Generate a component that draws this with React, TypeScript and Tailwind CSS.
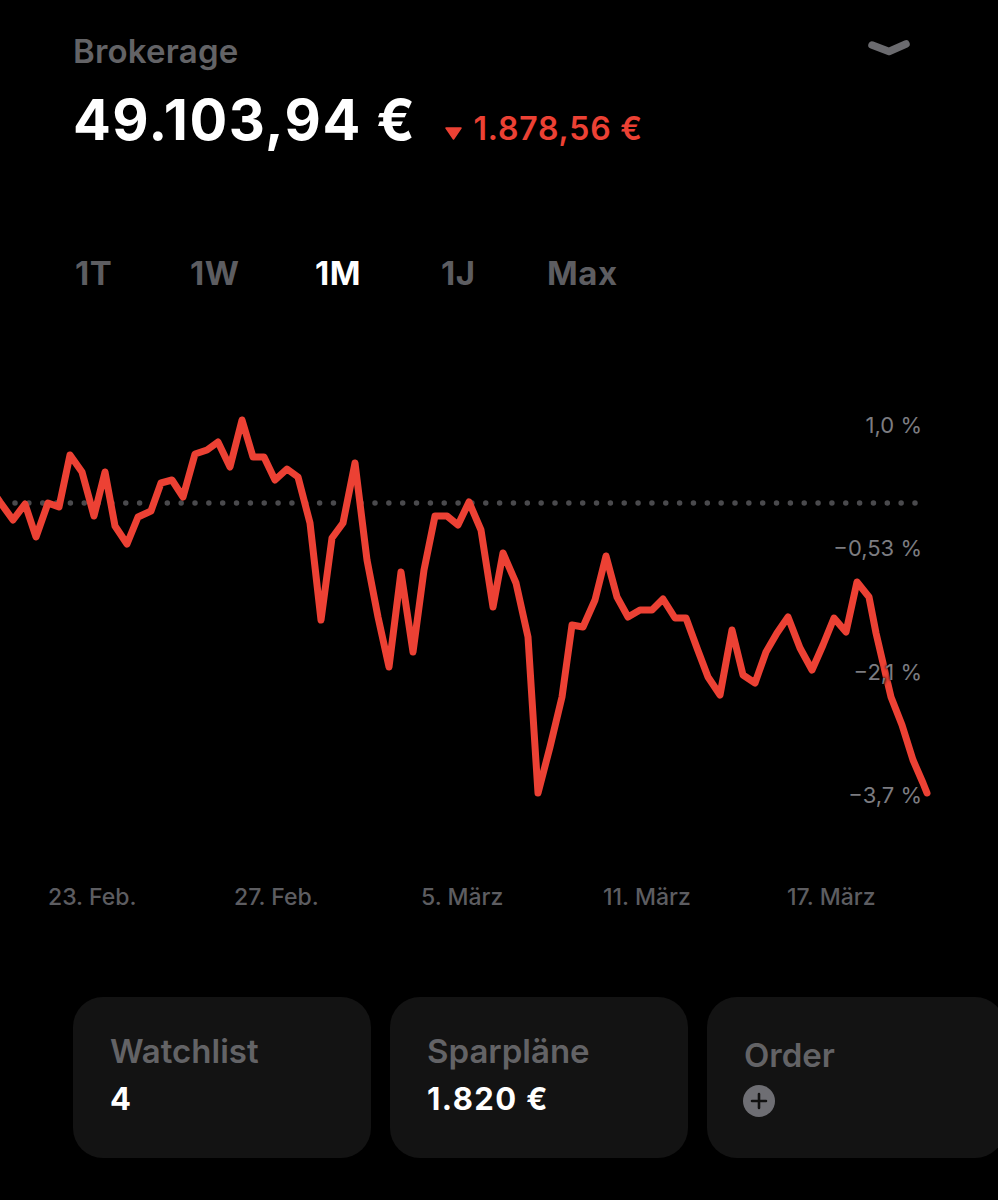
import React from "react";

const points: [number, number][] = [
  [-4, 496], [0, 502], [13, 520], [25, 504], [36, 537], [48, 503], [59, 507], [70, 455], [82, 472],
  [94, 516], [105, 472], [115, 526], [127, 544], [138, 517], [151, 511], [161, 483], [172, 480],
  [183, 497], [195, 454], [207, 450], [218, 442], [230, 467], [242, 420], [253, 457], [264, 457],
  [275, 480], [287, 469], [298, 477], [310, 523], [321, 620], [332, 538], [343, 523], [355, 463],
  [367, 560], [378, 617], [389, 667], [401, 572], [413, 652], [424, 570], [435, 516], [447, 516],
  [458, 525], [469, 502], [481, 530], [493, 607], [503, 553], [516, 583], [528, 637], [538, 793],
  [550, 747], [562, 697], [572, 625], [583, 627], [595, 600], [606, 556], [617, 597], [628, 617],
  [640, 610], [652, 610], [663, 599], [675, 618], [686, 618], [697, 648], [708, 677], [720, 695],
  [732, 630], [743, 675], [755, 683], [766, 652], [777, 633], [788, 617], [800, 648], [812, 670],
  [823, 645], [834, 618], [846, 632], [857, 582], [869, 597], [876, 633], [883, 663], [891, 697],
  [902, 725], [913, 760], [923, 783], [927, 793],
];

const tabs = [
  { label: "1T", w: "w-[115px]" },
  { label: "1W", w: "w-[125px]" },
  { label: "1M", w: "w-[126px]" },
  { label: "1J", w: "w-[106px]" },
  { label: "Max", w: "w-[100px]" },
];

// y-axis labels, top offsets relative to the chart box
const yLabels = [
  { text: "1,0 %", top: "top-[120px]" },
  { text: "−0,53 %", top: "top-[243px]" },
  { text: "−2,1 %", top: "top-[367px]" },
  { text: "−3,7 %", top: "top-[490px]" },
];

const dates = [
  { text: "23. Feb.", w: "w-[186px]" },
  { text: "27. Feb.", w: "w-[187px]" },
  { text: "5. März", w: "w-[182px]" },
  { text: "11. März", w: "w-[184px]" },
  { text: "17. März", w: "w-[120px]" },
];

export default function App() {
  return (
    <div className="min-h-screen w-full overflow-hidden bg-black font-['Inter',sans-serif]">
      {/* header */}
      <div className="flex items-start justify-between pl-[73px] pr-[87px] pt-[32px]">
        <div className="text-[33px] font-semibold leading-[38px] tracking-[0.2px] text-[#636366]">Brokerage</div>
        <svg width="44" height="20" viewBox="0 0 44 20" className="mt-[6px]">
          <polyline points="5,7 22,13.5 39,6" fill="none" stroke="#6b6b6f" strokeWidth="7.5" strokeLinecap="round" strokeLinejoin="round" />
        </svg>
      </div>

      <div className="mt-[18px] flex items-baseline pl-[73px]">
        <span className="text-[56px] font-bold leading-[64px] tracking-[1.5px] text-white">49.103,94 €</span>
        <svg width="17" height="13" viewBox="0 0 17 13" className="ml-[29px]">
          <polygon points="1,1 16,1 8.5,12" fill="#ec4134" stroke="#ec4134" strokeWidth="1.5" strokeLinejoin="round" />
        </svg>
        <span className="ml-[11px] text-[32px] font-semibold leading-[38px] tracking-[0.8px] text-[#ec4134]">1.878,56 €</span>
      </div>

      {/* time range tabs */}
      <div className="mt-[102px] flex pl-[75px]">
        {tabs.map((t) => (
          <span
            key={t.label}
            className={`${t.w} shrink-0 text-[33px] font-bold leading-[38px] tracking-[0.5px] ${t.label === "1M" ? "text-white" : "text-[#5d5d61]"}`}
          >
            {t.label}
          </span>
        ))}
      </div>

      {/* chart */}
      <div className="relative h-[568px] w-full">
        <svg width="998" height="568" viewBox="0 292 998 568" className="absolute inset-0">
          <line x1="15" y1="503" x2="915" y2="503" stroke="#4a4a4d" strokeWidth="5.5" strokeLinecap="round" strokeDasharray="0 13.846" />
          <polyline
            points={points.map((p) => p.join(",")).join(" ")}
            fill="none"
            stroke="#ec4134"
            strokeWidth="7"
            strokeLinejoin="round"
            strokeLinecap="round"
          />
        </svg>
        {yLabels.map((l) => (
          <span
            key={l.text}
            className={`absolute right-[76px] ${l.top} text-[22px] leading-[26px] text-[#7c7c80] [text-shadow:0_0_3px_#000,0_0_3px_#000]`}
          >
            {l.text}
          </span>
        ))}
      </div>

      {/* date axis */}
      <div className="mt-[23px] flex pl-[48px]">
        {dates.map((d) => (
          <span key={d.text} className={`${d.w} shrink-0 text-[23px] font-medium leading-[28px] text-[#5d5d61]`}>
            {d.text}
          </span>
        ))}
      </div>

      {/* cards */}
      <div className="mt-[86px] flex gap-[19px] pl-[73px]">
        <div className="h-[161px] w-[298px] shrink-0 rounded-[30px] bg-[#131313] pl-[37px] pt-[35px]">
          <div className="text-[33px] font-semibold leading-[38px] text-[#636366]">Watchlist</div>
          <div className="mt-[11px] text-[31px] font-bold leading-[36px] tracking-[1.4px] text-white">4</div>
        </div>
        <div className="h-[161px] w-[298px] shrink-0 rounded-[30px] bg-[#131313] pl-[37px] pt-[35px]">
          <div className="text-[33px] font-semibold leading-[38px] text-[#636366]">Sparpläne</div>
          <div className="mt-[11px] text-[31px] font-bold leading-[36px] tracking-[1.4px] text-white">1.820 €</div>
        </div>
        <div className="h-[161px] w-[298px] shrink-0 rounded-[30px] bg-[#131313] pl-[37px] pt-[39px]">
          <div className="text-[33px] font-semibold leading-[38px] text-[#636366]">Order</div>
          <svg width="32" height="32" viewBox="0 0 32 32" className="mt-[11px] -ml-[1px]">
            <circle cx="16" cy="16" r="16" fill="#6e6e73" />
            <path d="M16 9v14M9 16h14" stroke="#111111" strokeWidth="2.6" strokeLinecap="round" />
          </svg>
        </div>
      </div>
    </div>
  );
}
